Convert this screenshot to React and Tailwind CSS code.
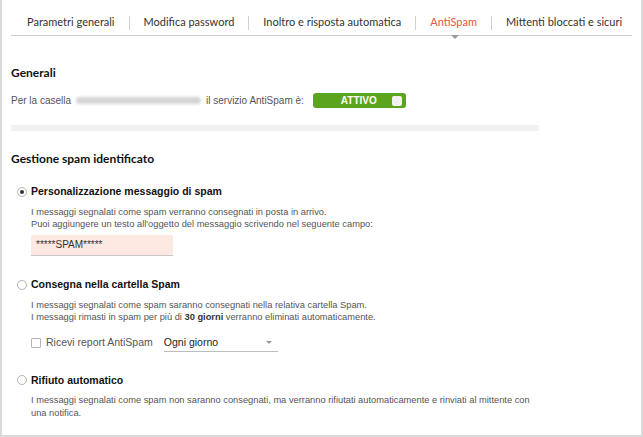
import { useState } from 'react';

const tabs = [
  'Parametri generali',
  'Modifica password',
  'Inoltro e risposta automatica',
  'AntiSpam',
  'Mittenti bloccati e sicuri',
];

function Radio({ checked }) {
  return (
    <span className="w-[10px] h-[10px] rounded-full border border-[#b5b5b5] bg-white flex items-center justify-center shrink-0">
      {checked && <span className="w-[4px] h-[4px] rounded-full bg-[#333]" />}
    </span>
  );
}

function Option({ checked, label, children }) {
  return (
    <div className="flex flex-col">
      <div className="flex items-center gap-[4px] pl-[15px]">
        <Radio checked={checked} />
        <span className="font-bold text-[10.5px] text-[#111]">{label}</span>
      </div>
      <div className="pl-[29px] pt-[6px] text-[9.3px] leading-[12.5px] text-[#555]">{children}</div>
    </div>
  );
}

export default function App() {
  const [active] = useState(3);

  return (
    <div className="w-[643px] h-[437px] bg-white border-x-2 border-b-2 border-[#dadada] font-['Liberation_Sans',Arial,sans-serif] overflow-hidden">
      {/* tabs */}
      <div className="mx-[9px] mt-[10px] h-[26px] border-b border-[#cfcfcf] flex items-center pl-[16px] font-['Lato',sans-serif] text-[11px] text-[#333] whitespace-nowrap">
        {tabs.map((t, i) => (
          <div key={t} className="flex items-center">
            {i > 0 && <span className="w-px h-[14px] bg-[#d0d0d0] mx-[14px]" />}
            <span className={i === active ? 'text-[#e8553e] relative' : ''}>
              {t}
              {i === active && (
                <span className="absolute left-[21px] top-[21px] w-0 h-0 border-x-[4px] border-x-transparent border-t-[4px] border-t-[#9a9a9a]" />
              )}
            </span>
          </div>
        ))}
      </div>

      <div className="px-[9px]">
        <h2 className="font-['Lato',sans-serif] font-bold text-[12px] text-[#111] mt-[28px]">Generali</h2>
        <div className="flex items-center mt-[11px] text-[10px] text-[#555]">
          <span>Per la casella</span>
          <span className="mx-[5px] w-[125px] h-[7px] rounded-full bg-[#d4d4d4] blur-[1.5px]" />
          <span>il servizio AntiSpam è:</span>
          <div className="ml-[9px] w-[93px] h-[15px] rounded-[3px] bg-[#5ba51e] flex items-center justify-between pl-[28px] pr-[4px]">
            <span className="text-white font-bold text-[10px] leading-none">ATTIVO</span>
            <span className="w-[10px] h-[10px] rounded-[2px] bg-[#f1f1f1]" />
          </div>
        </div>
        <div className="mt-[17px] w-[528px] h-[6px] bg-[#f1f1f1]" />

        <h2 className="font-['Lato',sans-serif] font-bold text-[12px] text-[#111] mt-[19px]">Gestione spam identificato</h2>
      </div>

      <div className="flex flex-col mt-[16px] gap-[21px]">
        <Option checked label="Personalizzazione messaggio di spam">
          <p>I messaggi segnalati come spam verranno consegnati in posta in arrivo.</p>
          <p>Puoi aggiungere un testo all'oggetto del messaggio scrivendo nel seguente campo:</p>
          <div className="mt-[4px] w-[142px] h-[21px] bg-[#fde9e1] border-b border-[#c9c9c9] flex items-center pl-[5px] text-[10px] text-[#333]">
            *****SPAM*****
          </div>
        </Option>

        <Option label="Consegna nella cartella Spam">
          <p>I messaggi segnalati come spam saranno consegnati nella relativa cartella Spam.</p>
          <p>
            I messaggi rimasti in spam per più di <b className="text-[#333]">30 giorni</b> verranno eliminati automaticamente.
          </p>
          <div className="flex items-center mt-[10px] text-[10.5px]">
            <span className="w-[10px] h-[10px] border border-[#b5b5b5] rounded-[1px] bg-white" />
            <span className="ml-[5px] text-[#555]">Ricevi report AntiSpam</span>
            <div className="ml-[11px] w-[114px] h-[18px] border-b border-[#bdbdbd] flex items-center justify-between pr-[6px] text-[#222]">
              <span>Ogni giorno</span>
              <span className="w-0 h-0 border-x-[3px] border-x-transparent border-t-[3px] border-t-[#9a9a9a]" />
            </div>
          </div>
        </Option>

        <Option label="Rifiuto automatico">
          <p className="w-[510px]">
            I messaggi segnalati come spam non saranno consegnati, ma verranno rifiutati automaticamente e rinviati al mittente con una notifica.
          </p>
        </Option>
      </div>
    </div>
  );
}
